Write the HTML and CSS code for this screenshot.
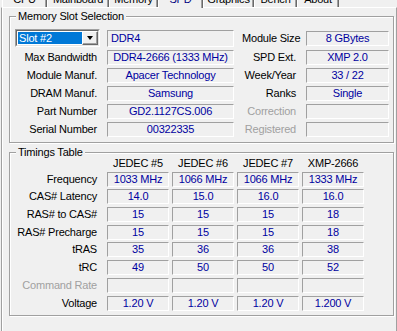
FILE: index.html
```html
<!DOCTYPE html>
<html lang="en">
<head>
    <meta charset="UTF-8">
    <title>CPU-Z - SPD</title>
    <link rel="stylesheet" href="styles.css">
</head>
<body>
    <div class="tabs">
        <div class="tab tab-cpu">CPU</div>
        <div class="tab tab-mainboard">Mainboard</div>
        <div class="tab tab-memory">Memory</div>
        <div class="tab tab-spd active">SPD</div>
        <div class="tab tab-graphics">Graphics</div>
        <div class="tab tab-bench">Bench</div>
        <div class="tab tab-about">About</div>
    </div>

    <div class="page">
        <div class="group slot-group">
            <div class="group-title">Memory Slot Selection</div>
            <div class="slot-grid">
                <div class="combo">
                    <div class="combo-inner">
                        <span class="combo-value">Slot #2</span>
                        <span class="combo-btn"><span class="arrow"></span></span>
                    </div>
                </div>
                <div class="field left tall">DDR4</div>
                <div class="label">Module Size</div>
                <div class="field">8 GBytes</div>

                <div class="label">Max Bandwidth</div>
                <div class="field">DDR4-2666 (1333 MHz)</div>
                <div class="label">SPD Ext.</div>
                <div class="field">XMP 2.0</div>

                <div class="label">Module Manuf.</div>
                <div class="field">Apacer Technology</div>
                <div class="label">Week/Year</div>
                <div class="field">33 / 22</div>

                <div class="label">DRAM Manuf.</div>
                <div class="field">Samsung</div>
                <div class="label">Ranks</div>
                <div class="field">Single</div>

                <div class="label">Part Number</div>
                <div class="field">GD2.1127CS.006</div>
                <div class="label disabled">Correction</div>
                <div class="field"></div>

                <div class="label">Serial Number</div>
                <div class="field">00322335</div>
                <div class="label disabled">Registered</div>
                <div class="field"></div>
            </div>
        </div>

        <div class="group timing-group">
            <div class="group-title">Timings Table</div>
            <div class="timing-grid">
                <div></div>
                <div class="head">JEDEC #5</div>
                <div class="head">JEDEC #6</div>
                <div class="head">JEDEC #7</div>
                <div class="head">XMP-2666</div>

                <div class="label">Frequency</div>
                <div class="field">1033 MHz</div>
                <div class="field">1066 MHz</div>
                <div class="field">1066 MHz</div>
                <div class="field">1333 MHz</div>

                <div class="label">CAS# Latency</div>
                <div class="field">14.0</div>
                <div class="field">15.0</div>
                <div class="field">16.0</div>
                <div class="field">16.0</div>

                <div class="label">RAS# to CAS#</div>
                <div class="field">15</div>
                <div class="field">15</div>
                <div class="field">15</div>
                <div class="field">18</div>

                <div class="label">RAS# Precharge</div>
                <div class="field">15</div>
                <div class="field">15</div>
                <div class="field">15</div>
                <div class="field">18</div>

                <div class="label">tRAS</div>
                <div class="field">35</div>
                <div class="field">36</div>
                <div class="field">36</div>
                <div class="field">38</div>

                <div class="label">tRC</div>
                <div class="field">49</div>
                <div class="field">50</div>
                <div class="field">50</div>
                <div class="field">52</div>

                <div class="label disabled">Command Rate</div>
                <div class="field"></div>
                <div class="field"></div>
                <div class="field"></div>
                <div class="field"></div>

                <div class="label">Voltage</div>
                <div class="field">1.20 V</div>
                <div class="field">1.20 V</div>
                <div class="field">1.20 V</div>
                <div class="field">1.200 V</div>
            </div>
        </div>
    </div>
</body>
</html>
```

FILE: styles.css
```css
* {
    box-sizing: border-box;
}
html, body {
    margin: 0;
    overflow: hidden;
}
body {
    width: 397px;
    height: 331px;
    background: #f0f0f0;
    font-family: "Liberation Sans", Arial, sans-serif;
    font-size: 11px;
    letter-spacing: -0.2px;
    color: #000;
}

/* tab strip, only its lower edge is on screen */
.tabs {
    display: flex;
    height: 18px;
    margin-top: -11px;
    padding-left: 2px;
    position: relative;
    z-index: 1;
}
.tab {
    height: 18px;
    padding-top: 2px;
    line-height: 14px;
    text-align: center;
    white-space: nowrap;
    border: 1px solid;
    border-color: #fff #696969 transparent #fff;
    border-bottom: 0;
    box-shadow: inset -1px 0 0 #a0a0a0;
}
.tab-cpu { width: 45px; }
.tab-mainboard { width: 62px; }
.tab-memory { width: 49px; }
.tab-spd { width: 45px; }
.tab-graphics { width: 51px; }
.tab-bench { width: 43px; }
.tab-about { width: 42px; }
.tab.active {
    height: 19px;
    margin-bottom: -1px;
    color: #000080;
    background: #f0f0f0;
}

.page {
    height: 340px;
    margin-left: 1px;
    padding: 0 0 0 7px;
    border-top: 1px solid #fff;
    border-left: 1px solid #a0a0a0;
    border-right: 1px solid #a0a0a0;
    box-shadow: inset 1px 0 0 #fff;
    overflow: hidden;
}

/* etched group box */
.group {
    width: 385px;
    border: 1px solid #a0a0a0;
    box-shadow: inset 1px 1px 0 #fff, 1px 1px 0 #fff;
}
.group-title {
    width: max-content;
    margin: -6px 0 0 6px;
    padding: 0 2px;
    line-height: 11px;
    background: #f0f0f0;
}
.slot-group {
    margin-top: 8px;
    padding-bottom: 5px;
}
.timing-group {
    margin-top: 9px;
    padding-bottom: 4px;
}

.slot-grid {
    display: grid;
    grid-template-columns: 89px 127px 56px 83px;
    grid-template-rows: 18px repeat(5, 15px);
    column-gap: 8px;
    row-gap: 3px;
    margin-top: 7px;
    align-items: center;
}
.timing-grid {
    display: grid;
    grid-template-columns: 94px repeat(4, 62px);
    grid-template-rows: 11px repeat(8, 15px);
    column-gap: 3px;
    row-gap: 2.7px;
}
.timing-grid .label {
    padding-right: 7px;
}

.label {
    line-height: 15px;
    padding-right: 2px;
    text-align: right;
    white-space: nowrap;
}
.label.disabled {
    color: #a0a0a0;
}
.head {
    line-height: 11px;
    text-align: center;
    white-space: nowrap;
}
.field {
    height: 15px;
    line-height: 13px;
    color: #0000a0;
    text-align: center;
    white-space: nowrap;
    overflow: hidden;
    border: 1px solid;
    border-color: #a0a0a0 #fff #fff #a0a0a0;
}
.field.left {
    text-align: left;
    padding-left: 3px;
}
.field.tall {
    height: 17px;
    line-height: 15px;
}

/* slot combo box */
.combo {
    width: 85px;
    height: 18px;
    margin-left: 5px;
    border: 1px solid;
    border-color: #a0a0a0 #fff #fff #a0a0a0;
}
.combo-inner {
    display: flex;
    height: 100%;
    padding: 1px;
    background: #fff;
    border: 1px solid;
    border-color: #696969 #e3e3e3 #e3e3e3 #696969;
}
.combo-value {
    flex: 1;
    padding-left: 1px;
    line-height: 12px;
    color: #fff;
    background: #0078d7;
}
.combo-btn {
    width: 16px;
    margin: -1px -1px -1px 0;
    display: flex;
    align-items: center;
    justify-content: center;
    background: #f0f0f0;
    border: 1px solid;
    border-color: #fff #696969 #696969 #fff;
    box-shadow: inset -1px -1px 0 #a0a0a0;
}
.arrow {
    width: 0;
    height: 0;
    border-left: 3.5px solid transparent;
    border-right: 3.5px solid transparent;
    border-top: 4px solid #000;
}
```
